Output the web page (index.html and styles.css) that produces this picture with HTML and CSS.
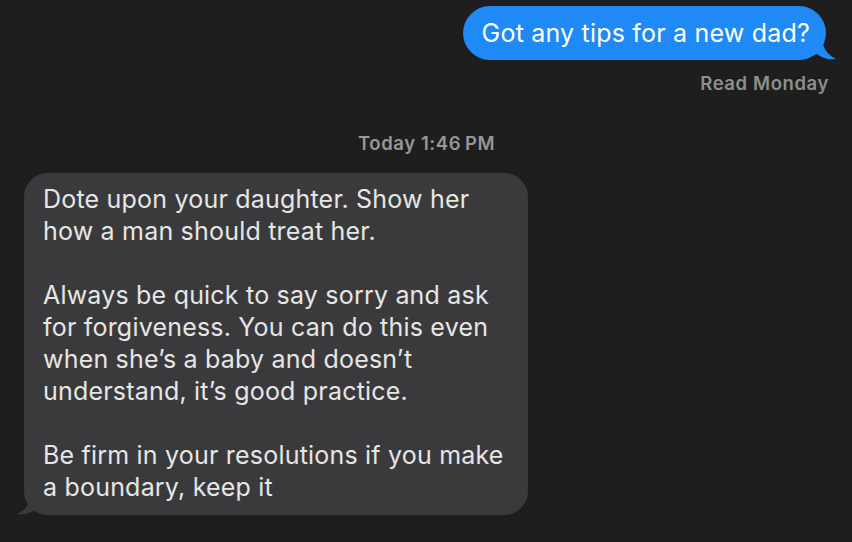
FILE: index.html
```html
<!DOCTYPE html>
<html>
<head>
<meta charset="utf-8">
<link rel="stylesheet" href="styles.css">
</head>
<body>
<div class="thread">
  <div class="row row-out">
    <div class="bubble bubble-out">
      Got any tips for a new dad?
      <svg class="tail tail-out" width="26" height="26" viewBox="0 0 26 26"><path d="M0 0 H8 C8 12 12 19 22 24 C14 25 8 23 3 19 C0 20 -2 20 -4 20 Z" fill="#1f8af6"/></svg>
    </div>
  </div>
  <div class="receipt">Read Monday</div>
  <div class="stamp">Today 1:46&#8239;PM</div>
  <div class="row row-in">
    <div class="bubble bubble-in">
      <p>Dote upon your daughter. Show her<br>how a man should treat her.</p>
      <p>Always be quick to say sorry and ask<br>for forgiveness. You can do this even<br>when she’s a baby and doesn’t<br>understand, it’s good practice.</p>
      <p>Be firm in your resolutions if you make<br>a boundary, keep it</p>
      <svg class="tail tail-in" width="26" height="26" viewBox="0 0 26 26"><path d="M26 0 H18 C18 12 14 19 4 24 C12 25 18 23 23 19 C26 20 28 20 30 20 Z" fill="#3a3a3c"/></svg>
    </div>
  </div>
</div>
</body>
</html>
```
FILE: styles.css
```css
html, body {
  margin: 0;
  padding: 0;
  background: #1e1e1e;
  height: 100%;
}
body {
  font-family: Inter, "Noto Sans", sans-serif;
  -webkit-font-smoothing: antialiased;
}
.thread {
  display: flex;
  flex-direction: column;
  padding-top: 6px;
}
.row {
  display: flex;
}
.row-out {
  justify-content: flex-end;
  padding-right: 26px;
}
.row-in {
  justify-content: flex-start;
  padding-left: 24px;
}
.bubble {
  position: relative;
}
.bubble-out {
  background: #1f8af6;
  color: #ffffff;
  font-size: 25px;
  letter-spacing: 0.2px;
  line-height: 54px;
  height: 54px;
  padding: 0 16px 0 19px;
  border-radius: 27px;
  white-space: nowrap;
}
.bubble-in {
  background: #3a3a3c;
  color: #e6e6e6;
  font-size: 25px;
  letter-spacing: 0.2px;
  line-height: 32px;
  width: 504px;
  box-sizing: border-box;
  padding: 10px 20px 12px 19px;
  border-radius: 24px;
  white-space: nowrap;
}
.bubble-in p {
  margin: 0;
}
.bubble-in p + p {
  margin-top: 32px;
}
.tail {
  position: absolute;
  bottom: 0;
  pointer-events: none;
}
.tail-out {
  right: -14px;
  bottom: -1px;
}
.tail-in {
  left: -11px;
  bottom: -1px;
}
.receipt {
  align-self: flex-end;
  margin-right: 23px;
  margin-top: 12px;
  font-size: 18.5px;
  letter-spacing: 0.6px;
  font-weight: 600;
  color: #8e8e8e;
  line-height: 22px;
}
.stamp {
  align-self: center;
  margin-left: 1px;
  margin-top: 38px;
  font-size: 18.5px;
  letter-spacing: 0.6px;
  font-weight: 600;
  color: #979797;
  line-height: 22px;
  margin-bottom: 19px;
}
```
